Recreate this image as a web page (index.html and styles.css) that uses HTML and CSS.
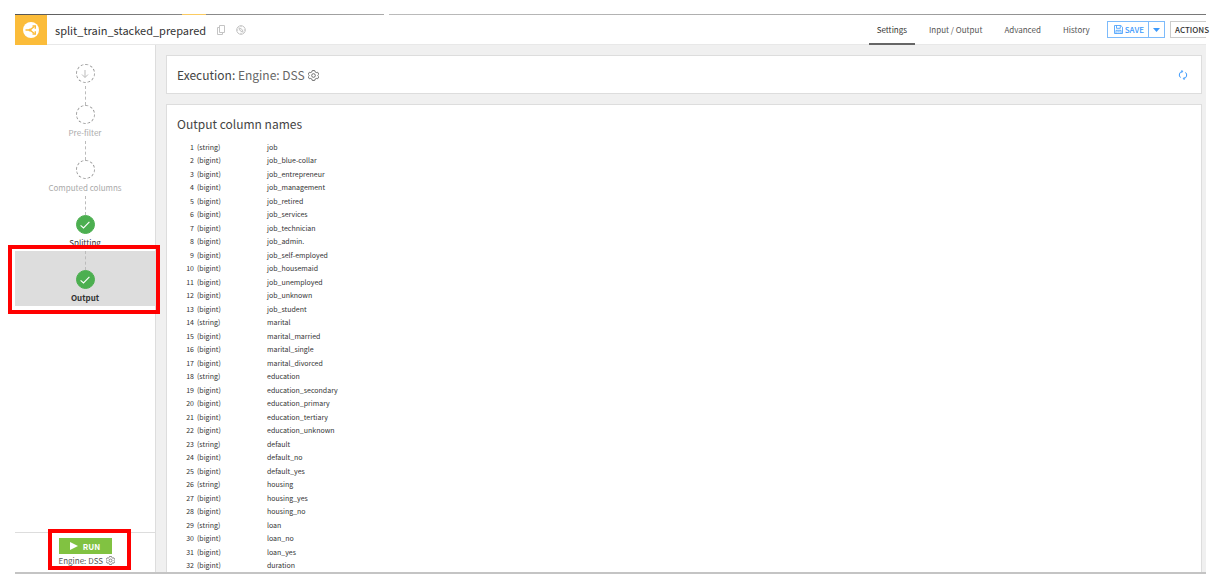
FILE: index.html
```html
<!DOCTYPE html>
<html lang="en">
  <head>
    <meta charset="utf-8">
    <title>split_train_stacked_prepared</title>
    <link rel="stylesheet" href="styles.css">
  </head>
  <body>
    <div class="top-line"></div>
    <header class="header">
      <div class="recipe-icon">
        <svg width="16" height="16" viewBox="0 0 16 16">
          <circle cx="8" cy="8" r="8" fill="#fff"/>
          <g fill="none" stroke="#fbbc3a" stroke-width="1.4">
            <path d="M2.500 8h5M7.500 7.500l3.500-2.700M7.500 8.500l3.500 2.700"/>
            <path d="M9.500 4h2.800v2.800M9.500 12h2.800V9.200"/>
          </g>
          <circle cx="7" cy="8" r="1.5" fill="#fbbc3a"/>
        </svg>
      </div>
      <h1 class="title">split_train_stacked_prepared</h1>
      <button class="icon-btn" aria-label="Copy">
        <svg width="10" height="10" viewBox="0 0 10 10" fill="none" stroke="#c4c4c4">
          <path d="M3.5.5h5v7h-5zM3.5 2.5h-2v7h5v-2"/>
        </svg>
      </button>
      <button class="icon-btn" aria-label="Navigate">
        <svg width="10" height="10" viewBox="0 0 10 10" fill="none" stroke="#c4c4c4">
          <circle cx="5" cy="5" r="4.3"/>
          <path d="M2.8 2.8l1.6 3.2 2.8 1.2-1.4-3z M5 .7v1.5M5 7.8v1.5M.7 5h1.5M7.8 5h1.5"/>
        </svg>
      </button>
      <nav class="tabs">
        <a class="tab active" href="#">Settings</a>
        <a class="tab" href="#">Input / Output</a>
        <a class="tab" href="#">Advanced</a>
        <a class="tab" href="#">History</a>
      </nav>
      <div class="save-group">
        <button class="save">
          <svg width="9" height="9" viewBox="0 0 9 9" fill="none" stroke="#3b99fc" stroke-width=".8">
            <path d="M.5.5h6.3l1.7 1.7v6.3h-8zM2.5.5v2.8h3.8V.5M2 8.5v-3.2h5v3.2M3.2 6.9h2.6"/>
          </svg>
          SAVE
        </button>
        <button class="save-more" aria-label="More save options">
          <svg width="7" height="4" viewBox="0 0 7 4"><path d="M0 0h7L3.500 4z" fill="#3b99fc"/></svg>
        </button>
      </div>
      <button class="actions">ACTIONS</button>
    </header>

    <div class="content">
      <aside class="sidebar">
        <ol class="steps">
          <li class="step first">
            <span class="dot">
              <svg width="8" height="8" viewBox="0 0 8 8" fill="none" stroke="#bbb"><path d="M4 0v7.300M1 4.500l3 3 3-3"/></svg>
            </span>
          </li>
          <li class="step"><span class="dot"></span>Pre-filter</li>
          <li class="step"><span class="dot"></span>Computed columns</li>
          <li class="step done">
            <span class="dot">
              <svg width="10" height="8" viewBox="0 0 10 8" fill="none" stroke="#fff" stroke-width="1.100"><path d="M.6 4.300l2.900 2.700L9.400.8"/></svg>
            </span>
            Splitting
          </li>
          <li class="step done current">
            <span class="dot">
              <svg width="10" height="8" viewBox="0 0 10 8" fill="none" stroke="#fff" stroke-width="1.100"><path d="M.6 4.300l2.900 2.700L9.400.8"/></svg>
            </span>
            Output
            <span class="highlight"></span>
          </li>
        </ol>
        <div class="run-area">
          <div class="run-box">
            <button class="run">
              <svg width="8" height="8" viewBox="0 0 8 8"><path d="M0 0l8 4-8 4z" fill="#fff"/></svg>
              RUN
            </button>
            <div class="engine">
              Engine: DSS
              <svg width="9" height="9" viewBox="0 0 12 12" fill="none" stroke="#666">
                <path d="M4.700.6h2.600l.5 1.500 1.200.7 1.600-.3 1.200 2.200L10.700 6l1.100 1.300-1.200 2.200-1.600-.3-1.200.7-.5 1.500H4.700l-.5-1.500L3 9.200l-1.600.3L.2 7.300 1.300 6 .2 4.700l1.200-2.200 1.600.3 1.200-.7z"/>
                <circle cx="6" cy="6" r="2"/>
              </svg>
            </div>
            <span class="highlight"></span>
          </div>
        </div>
      </aside>

      <main class="main">
        <section class="card execution">
          <h2>Execution: <span class="light">Engine: DSS</span></h2>
          <button class="icon-btn" aria-label="Engine settings">
            <svg width="11" height="11" viewBox="0 0 12 12" fill="none" stroke="#666">
              <path d="M4.700.6h2.600l.5 1.500 1.200.7 1.600-.3 1.200 2.200L10.700 6l1.100 1.300-1.200 2.200-1.600-.3-1.200.7-.5 1.500H4.700l-.5-1.500L3 9.200l-1.600.3L.2 7.300 1.300 6 .2 4.700l1.200-2.200 1.600.3 1.200-.7z"/>
              <circle cx="6" cy="6" r="2"/>
            </svg>
          </button>
          <button class="icon-btn refresh" aria-label="Refresh">
            <svg width="10" height="10" viewBox="0 0 10 10" fill="none" stroke="#3b99fc">
              <path d="M4.200 1.400A3.600 3.600 0 0 0 2.500 7.600M5.800 8.600A3.600 3.600 0 0 0 7.500 2.400"/>
              <path d="M3.300.1l1.500 1.200-1.200 1.500M6.700 9.900L5.200 8.700l1.200-1.500"/>
            </svg>
          </button>
        </section>

        <section class="card columns">
          <h2>Output column names</h2>
          <table class="column-table">
            <tbody>
              <tr><td>1</td><td>(string)</td><td>job</td></tr>
              <tr><td>2</td><td>(bigint)</td><td>job_blue-collar</td></tr>
              <tr><td>3</td><td>(bigint)</td><td>job_entrepreneur</td></tr>
              <tr><td>4</td><td>(bigint)</td><td>job_management</td></tr>
              <tr><td>5</td><td>(bigint)</td><td>job_retired</td></tr>
              <tr><td>6</td><td>(bigint)</td><td>job_services</td></tr>
              <tr><td>7</td><td>(bigint)</td><td>job_technician</td></tr>
              <tr><td>8</td><td>(bigint)</td><td>job_admin.</td></tr>
              <tr><td>9</td><td>(bigint)</td><td>job_self-employed</td></tr>
              <tr><td>10</td><td>(bigint)</td><td>job_housemaid</td></tr>
              <tr><td>11</td><td>(bigint)</td><td>job_unemployed</td></tr>
              <tr><td>12</td><td>(bigint)</td><td>job_unknown</td></tr>
              <tr><td>13</td><td>(bigint)</td><td>job_student</td></tr>
              <tr><td>14</td><td>(string)</td><td>marital</td></tr>
              <tr><td>15</td><td>(bigint)</td><td>marital_married</td></tr>
              <tr><td>16</td><td>(bigint)</td><td>marital_single</td></tr>
              <tr><td>17</td><td>(bigint)</td><td>marital_divorced</td></tr>
              <tr><td>18</td><td>(string)</td><td>education</td></tr>
              <tr><td>19</td><td>(bigint)</td><td>education_secondary</td></tr>
              <tr><td>20</td><td>(bigint)</td><td>education_primary</td></tr>
              <tr><td>21</td><td>(bigint)</td><td>education_tertiary</td></tr>
              <tr><td>22</td><td>(bigint)</td><td>education_unknown</td></tr>
              <tr><td>23</td><td>(string)</td><td>default</td></tr>
              <tr><td>24</td><td>(bigint)</td><td>default_no</td></tr>
              <tr><td>25</td><td>(bigint)</td><td>default_yes</td></tr>
              <tr><td>26</td><td>(string)</td><td>housing</td></tr>
              <tr><td>27</td><td>(bigint)</td><td>housing_yes</td></tr>
              <tr><td>28</td><td>(bigint)</td><td>housing_no</td></tr>
              <tr><td>29</td><td>(string)</td><td>loan</td></tr>
              <tr><td>30</td><td>(bigint)</td><td>loan_no</td></tr>
              <tr><td>31</td><td>(bigint)</td><td>loan_yes</td></tr>
              <tr><td>32</td><td>(bigint)</td><td>duration</td></tr>
            </tbody>
          </table>
        </section>
      </main>
    </div>
  </body>
</html>
```
FILE: styles.css
```css
* {
  box-sizing: border-box;
}

body {
  margin: 0;
  padding: 14px 7px 4px 15px;
  height: 100vh;
  display: flex;
  flex-direction: column;
  overflow: hidden;
  background: #fff;
  color: #333;
  font-family: "Noto Sans CJK SC", "Open Sans", sans-serif;
  font-size: 8px;
  line-height: 13px;
}

button {
  font: inherit;
  cursor: pointer;
}

h1,
h2 {
  margin: 0;
  font-size: 12px;
  font-weight: normal;
  line-height: 16px;
}

.top-line {
  flex: none;
  height: 1px;
  background: linear-gradient(to right,
      #555 0,
      #888 14%,
      #fbcb61 14%,
      #fbcb61 16%,
      #888 16%,
      #aaa 31%,
      #fff 31%,
      #fff 31.4%,
      #bbb 31.4%,
      #aaa 70%,
      #777 100%);
}

/* header */
.header {
  flex: none;
  display: flex;
  align-items: center;
  height: 30px;
  border-bottom: 1px solid #e8e8e8;
}

.recipe-icon {
  flex: none;
  display: flex;
  align-items: center;
  justify-content: center;
  width: 32px;
  height: 30px;
  margin-right: 8px;
  background: #fbbc3a;
}

.title {
  margin-right: 10px;
  font-size: 11px;
}

.icon-btn {
  display: flex;
  padding: 0;
  border: 0;
  background: none;
}

.header .icon-btn {
  margin-right: 10px;
}

.tabs {
  display: flex;
  align-self: stretch;
  gap: 6px;
  margin-left: auto;
  margin-right: 9px;
}

.tab {
  padding: 0 8px;
  line-height: 30px;
  white-space: nowrap;
  color: #555;
  text-decoration: none;
}

.tab.active {
  color: #333;
  box-shadow: inset 0 -1px #666, 0 1px #666;
}

.save-group {
  flex: none;
  display: flex;
  height: 17px;
  margin-right: 5px;
  border: 1px solid #7dbbfb;
}

.save,
.save-more {
  display: flex;
  align-items: center;
  gap: 2px;
  padding: 0 4px 0 6px;
  border: 0;
  background: #fff;
  color: #3b99fc;
  font-weight: 500;
}

.save-more {
  padding: 0 4px;
  border-left: 1px solid #7dbbfb;
}

.actions {
  flex: none;
  width: 36px;
  height: 17px;
  padding: 0 0 0 4px;
  border: 1px solid #ccc;
  border-right: 0;
  background: #fff;
  color: #333;
  font-weight: 500;
  line-height: 15px;
  text-align: left;
  white-space: nowrap;
}

.content {
  flex: 1;
  display: flex;
  min-height: 0;
  border-bottom: 2px solid #c4c4c4;
}

/* steps on the left */
.sidebar {
  flex: none;
  display: flex;
  flex-direction: column;
  justify-content: space-between;
  width: 141px;
  border-right: 1px solid #ddd;
}

.steps {
  margin: 0;
  padding: 0;
  list-style: none;
}

.step {
  position: relative;
  display: flex;
  flex-direction: column;
  align-items: center;
  height: 55px;
  color: #aaa;
}

.step::before {
  content: "";
  height: 19px;
  border-left: 1px dashed #bbb;
}

.step.first {
  height: 41px;
}

.step.first::before {
  border: 0;
}

.dot {
  flex: none;
  display: flex;
  align-items: center;
  justify-content: center;
  width: 19px;
  height: 19px;
  margin-bottom: 2px;
  border: 1px dashed #999;
  border-radius: 50%;
}

.done {
  color: #333;
}

.done .dot {
  border: 1px solid #4caf50;
  background: #4caf50;
}

.current {
  background: #ddd;
  font-weight: bold;
}

.highlight {
  position: absolute;
  z-index: 1;
  inset: -6px -5px -8px -7px;
  border: 4px solid #f00;
}

.run-area {
  display: flex;
  justify-content: center;
  padding: 5px 0;
  border-top: 1px solid #ddd;
}

.run-box {
  position: relative;
}

.run-box .highlight {
  inset: -9px -19px -3px -11px;
}

.run {
  display: flex;
  align-items: center;
  justify-content: center;
  gap: 5px;
  width: 53px;
  height: 16px;
  padding: 0;
  border: 0;
  background: #81c241;
  color: #fff;
  font-weight: bold;
}

.engine {
  display: flex;
  align-items: center;
  gap: 3px;
  width: 53px;
  white-space: nowrap;
  color: #555;
}

.engine svg {
  flex: none;
}

/* right side */
.main {
  flex: 1;
  display: flex;
  flex-direction: column;
  gap: 10px;
  min-width: 0;
  padding: 10px 4px 0 10px;
  background: #f0f0f0;
  overflow: hidden;
}

.card {
  flex: none;
  padding: 11px 10px 10px;
  border: 1px solid #ddd;
  background: #fff;
}

.card h2 {
  color: #444;
}

.execution {
  display: flex;
  align-items: center;
  gap: 3px;
}

.light {
  color: #666;
}

.refresh {
  margin-left: auto;
  margin-right: 3px;
}

.column-table {
  margin-top: 9px;
  border-collapse: collapse;
  font-size: 7px;
}

.column-table td {
  padding: 0;
}

.column-table tr:nth-child(even) td {
  padding-bottom: 1px;
}

.column-table td:first-child {
  width: 17px;
  text-align: right;
}

.column-table td:nth-child(2) {
  width: 73px;
  padding-left: 3px;
}
```
